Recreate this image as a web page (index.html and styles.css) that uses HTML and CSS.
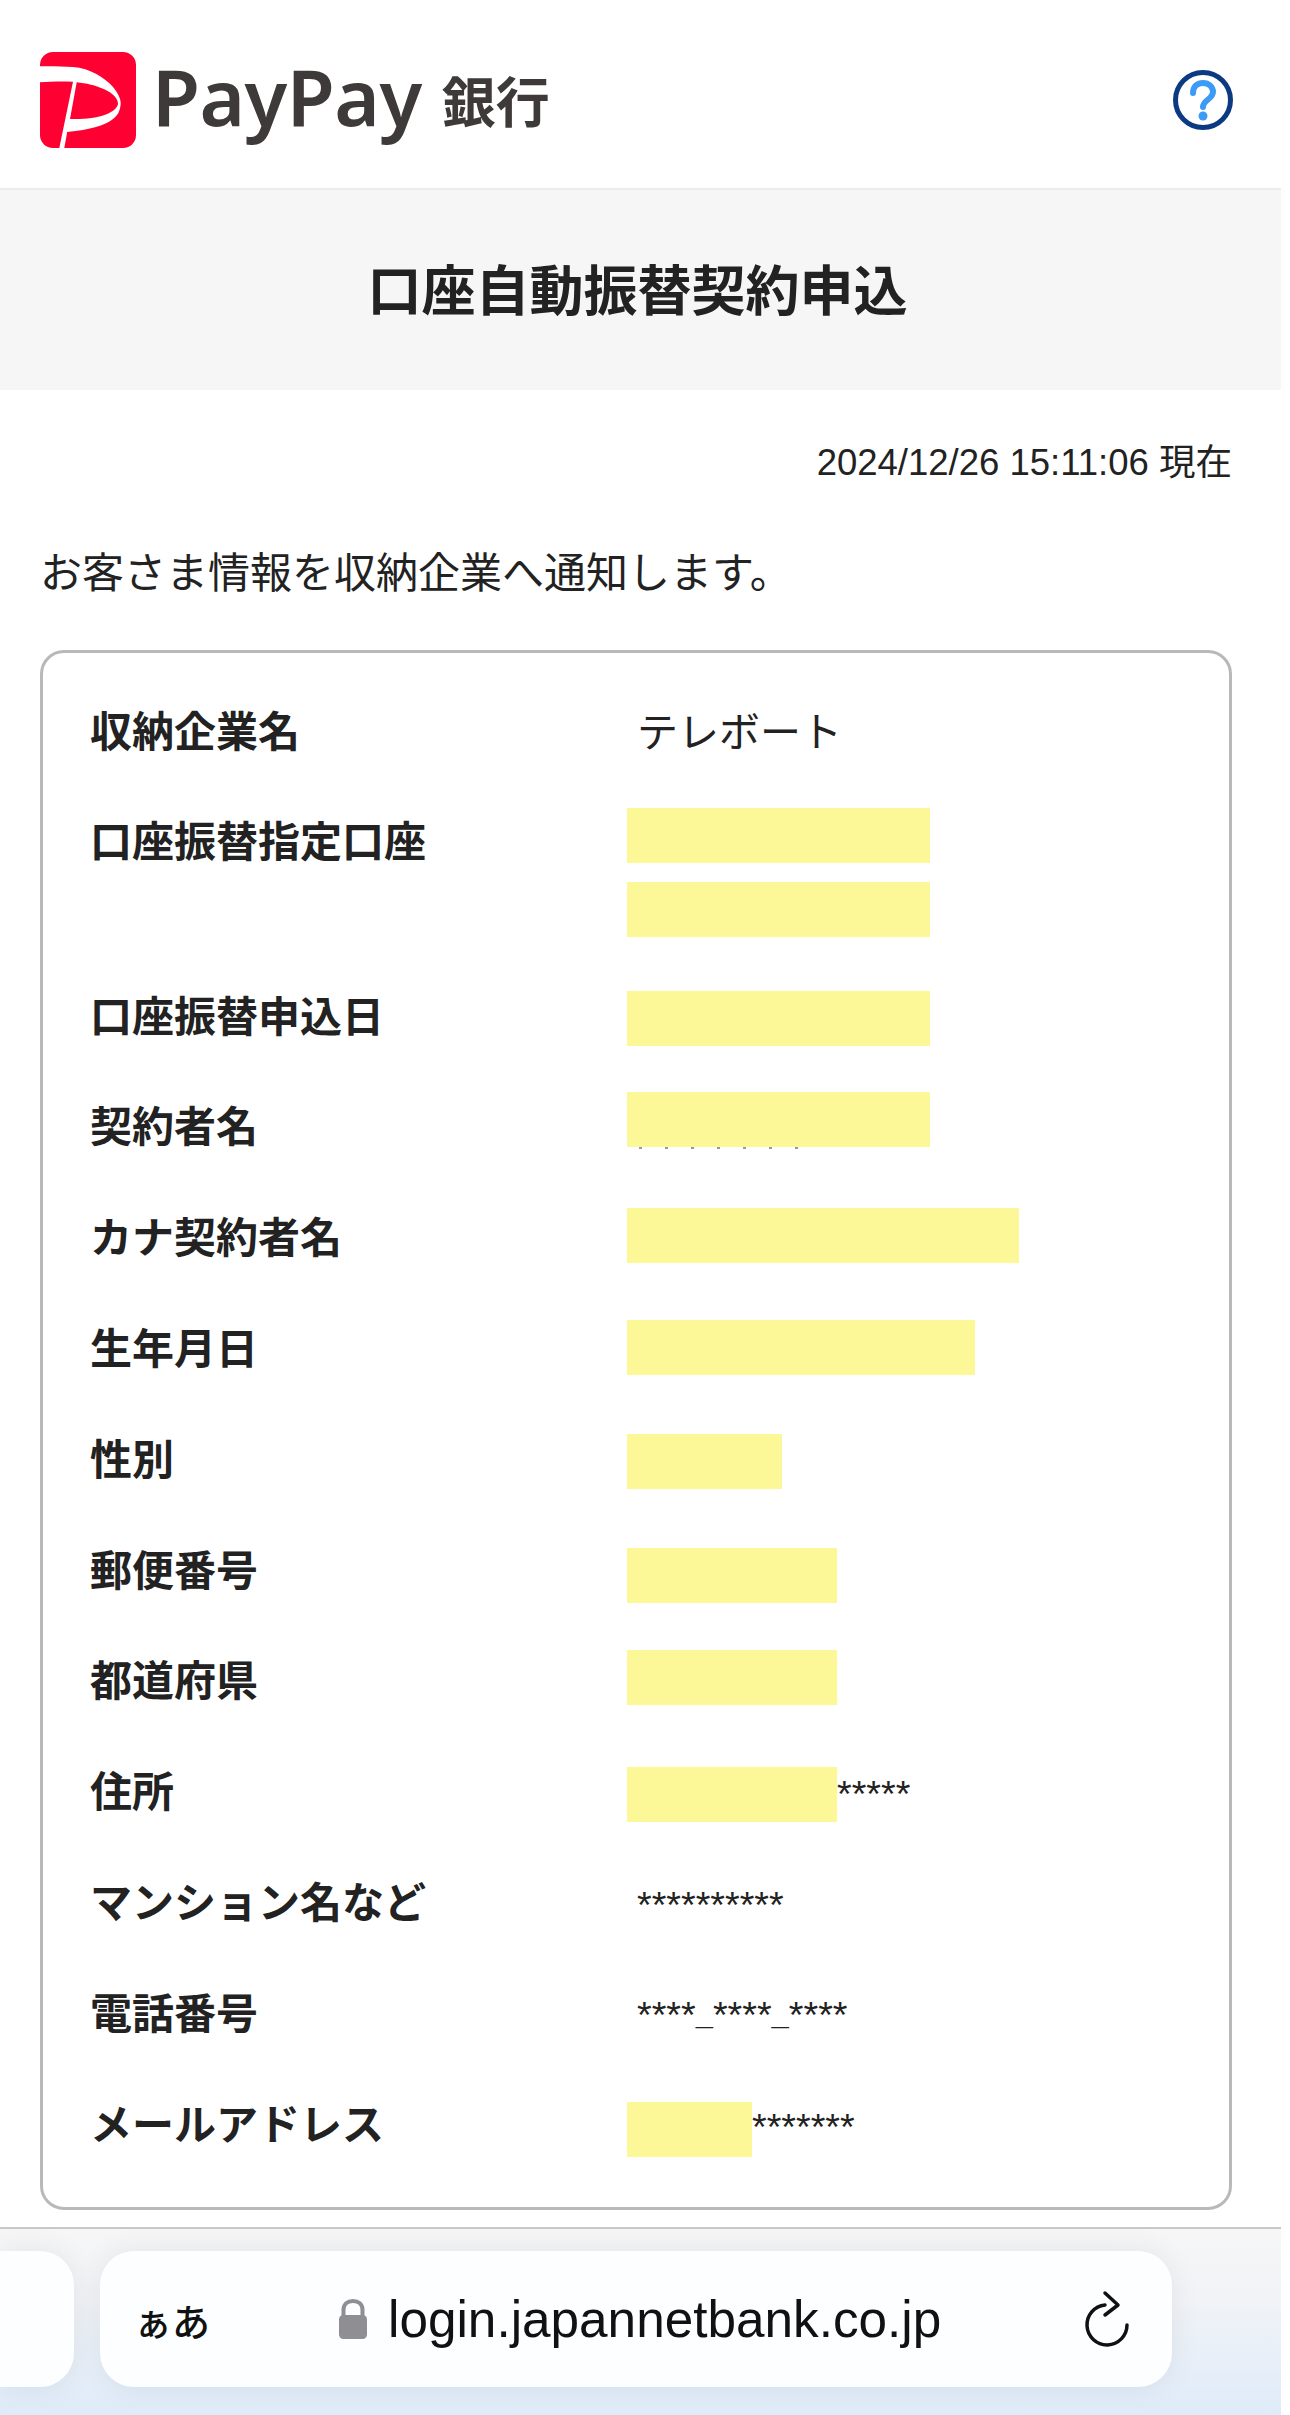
FILE: index.html
```html
<!DOCTYPE html>
<html lang="ja">
<head>
  <meta charset="UTF-8" />
  <title>口座自動振替契約申込</title>
  <link rel="stylesheet" href="styles.css">
</head>
<body>
  <div class="page">
    <header class="topbar">
      <div class="brand">
        <svg class="brand-mark" viewBox="0 0 96 96" aria-hidden="true">
          <rect width="96" height="96" rx="13" fill="#ff0033" />
          <path d="M0 14.300C12 14 22 14.500 33 15C50 16 65 26 73 35C78 41 81 47 80.700 52C80 60 77 64 73 67C66 73 50 78 27.200 80L24.300 96L19.300 96L33 29.700C22 29.300 10 29.500 0 30.300Z" fill="#fff" />
          <path d="M36.700 30.300C55 32 78 40 78 52C76 62 55 68 30 67Z" fill="#ff0033" />
        </svg>
        <span class="brand-name">PayPay</span>
        <span class="brand-bank">銀行</span>
      </div>
      <svg class="help" viewBox="0 0 60 60" aria-hidden="true">
        <circle cx="30" cy="30" r="27.500" fill="#fff" stroke="#0b3a82" stroke-width="5" />
        <path d="M20 23C20 16 25 13 30 13C36 13 40 17 40 22C40 29 30 30 30 37" fill="none" stroke="#3c9bf6" stroke-width="6" stroke-linecap="round" />
        <circle cx="30" cy="46" r="4.500" fill="#3c9bf6" />
      </svg>
    </header>

    <h1 class="title">口座自動振替契約申込</h1>

    <main class="content">
      <p class="timestamp">2024/12/26 15:11:06 現在</p>
      <p class="intro">お客さま情報を収納企業へ通知します。</p>

      <dl class="card">
        <div class="row">
          <dt>収納企業名</dt>
          <dd class="plain">テレボート</dd>
        </div>
        <div class="row row-double">
          <dt>口座振替指定口座</dt>
          <dd>
            <span class="redact w-lg"></span>
            <span class="redact w-lg next"></span>
          </dd>
        </div>
        <div class="row">
          <dt>口座振替申込日</dt>
          <dd><span class="redact w-lg"></span></dd>
        </div>
        <div class="row">
          <dt>契約者名</dt>
          <dd><span class="redact w-lg trace"></span></dd>
        </div>
        <div class="row">
          <dt>カナ契約者名</dt>
          <dd><span class="redact w-xl"></span></dd>
        </div>
        <div class="row">
          <dt>生年月日</dt>
          <dd><span class="redact w-birth"></span></dd>
        </div>
        <div class="row">
          <dt>性別</dt>
          <dd><span class="redact w-xs"></span></dd>
        </div>
        <div class="row">
          <dt>郵便番号</dt>
          <dd><span class="redact w-md"></span></dd>
        </div>
        <div class="row">
          <dt>都道府県</dt>
          <dd><span class="redact w-md"></span></dd>
        </div>
        <div class="row">
          <dt>住所</dt>
          <dd><span class="redact w-md"></span><span class="stars">*****</span></dd>
        </div>
        <div class="row">
          <dt>マンション名など</dt>
          <dd class="masked"><span class="stars">**********</span></dd>
        </div>
        <div class="row">
          <dt>電話番号</dt>
          <dd class="masked"><span class="stars">****<span class="sep">_</span>****<span class="sep">_</span>****</span></dd>
        </div>
        <div class="row">
          <dt>メールアドレス</dt>
          <dd><span class="redact w-sm"></span><span class="stars">*******</span></dd>
        </div>
      </dl>
    </main>

    <footer class="toolbar">
      <div class="tab-prev"></div>
      <div class="address">
        <span class="aa">ぁあ</span>
        <div class="url">
          <svg class="lock" viewBox="0 0 28 40" aria-hidden="true">
            <path d="M4.500 18V11C4.500 5 8.500 2 14 2C19.500 2 23.500 5 23.500 11V18" fill="none" stroke="#8e8e93" stroke-width="4" />
            <rect y="16" width="28" height="24" rx="4.500" fill="#8e8e93" />
          </svg>
          <span class="url-text">login.japannetbank.co.jp</span>
        </div>
        <svg class="reload" viewBox="0 0 48 58" aria-hidden="true">
          <path d="M43 35A20 20 0 1 1 21 15" fill="none" stroke="#111" stroke-width="3.500" stroke-linecap="round" />
          <path d="M21 3L34 15L21 25" fill="none" stroke="#111" stroke-width="3.500" stroke-linecap="round" stroke-linejoin="round" />
        </svg>
      </div>
    </footer>
  </div>
</body>
</html>
```

FILE: styles.css
```css
:root {
  --ink: #222;
  --line: #b9b9b9;
  --marker: #fdf897;
}

* { box-sizing: border-box; }

html, body { margin: 0; background: #fff; }

body {
  font-family: "Liberation Sans", "Noto Sans CJK JP", sans-serif;
  color: var(--ink);
}

.page {
  width: 1281px;
  height: 2415px;
  display: flex;
  flex-direction: column;
}

.topbar {
  height: 190px;
  flex: none;
  padding: 12px 48px 0 40px;
  display: flex;
  align-items: center;
  justify-content: space-between;
  border-bottom: 2px solid #ececec;
}

.brand { display: flex; align-items: center; }
.brand-mark { width: 96px; height: 96px; flex: none; }

.brand-name {
  margin: 0 0 8px 16px;
  font-family: "Noto Sans", sans-serif;
  font-size: 78px;
  font-weight: 600;
  letter-spacing: -0.5px;
  line-height: 96px;
  color: #3e3a39;
}

.brand-bank {
  margin-left: 20px;
  font-family: "Noto Sans CJK JP", sans-serif;
  font-size: 54px;
  font-weight: 700;
  line-height: 96px;
  color: #3e3a39;
}

.help { width: 60px; height: 60px; flex: none; }

.title {
  margin: 0;
  height: 200px;
  flex: none;
  padding: 0 6px 6px 0;
  display: flex;
  align-items: center;
  justify-content: center;
  background: #f6f6f6;
  font-family: "Noto Sans CJK JP", sans-serif;
  font-size: 54px;
  font-weight: 700;
  color: #222;
}

.content {
  flex: 1;
  padding: 0 49px 0 40px;
}

.timestamp {
  margin: 50px 0 0;
  text-align: right;
  font-size: 36.500px;
  line-height: 46px;
}

.intro {
  margin: 58px 0 0;
  font-size: 42px;
  line-height: 60px;
}

.card {
  margin: 46px 0 0;
  height: 1560px;
  padding: 20px 0 0 47px;
  border: 3px solid var(--line);
  border-radius: 24px;
}

.row {
  height: 110.800px;
  display: flex;
  align-items: center;
}

.row-double { height: 174px; align-items: flex-start; padding-top: 27px; }

dt {
  width: 537px;
  flex: none;
  font-family: "Noto Sans CJK JP", sans-serif;
  font-size: 42px;
  font-weight: 700;
  line-height: 55px;
}

dd {
  margin: 0;
  display: flex;
  align-items: flex-start;
  min-height: 55px;
}

.plain {
  padding: 11px 0 0 10px;
  font-size: 41px;
  line-height: 55px;
}

.masked { padding-left: 10px; }

.stars {
  font-size: 37.700px;
  line-height: 55px;
  white-space: nowrap;
  position: relative;
  top: 6px;
}

/* phone separators sit higher and heavier than a plain underscore */
.sep {
  font-size: 31px;
  font-weight: 700;
  position: relative;
  top: -4px;
}

/* yellow blocks painted over private values */
.redact {
  display: block;
  flex: none;
  height: 55px;
  background: var(--marker);
  position: relative;
}

.row-double dd { display: block; }
.next { margin-top: 19px; }

/* the blocks were placed by hand, none sits quite on the text line */
.row:nth-child(2) .redact { top: -3px; }
.row:nth-child(3) .redact { top: 5px; }
.row:nth-child(4) .redact { top: -4px; }
.row:nth-child(5) .redact { top: 1px; }
.row:nth-child(6) .redact { top: 2px; }
.row:nth-child(7) .redact { top: 5px; }
.row:nth-child(8) .redact { top: 8px; }
.row:nth-child(9) .redact { top: 0; }
.row:nth-child(10) .redact { top: 6px; }
.row:nth-child(13) .redact { top: 8px; }

.w-xs { width: 155px; }
.w-sm { width: 125px; }
.w-md { width: 210px; }
.w-lg { width: 303px; }
.w-birth { width: 348px; }
.w-xl { width: 392px; }

/* tips of the masked name showing under the block */
.trace::after {
  content: "";
  position: absolute;
  left: 12px;
  top: 100%;
  width: 170px;
  height: 2px;
  background: repeating-linear-gradient(90deg, #999 0 3px, transparent 3px 26px);
}

.toolbar {
  height: 188px;
  flex: none;
  padding-top: 22px;
  display: flex;
  gap: 26px;
  border-top: 2px solid #c8c8c8;
  background: linear-gradient(#f6f6f6, #f0f3f7 40%, #dfebf9);
}

.tab-prev {
  width: 74px;
  height: 136px;
  background: #fdfeff;
  border-radius: 0 34px 34px 0;
  box-shadow: 0 0 30px rgba(0, 0, 0, 0.07);
}

.address {
  width: 1072px;
  height: 136px;
  padding: 0 40px 0 34px;
  display: flex;
  align-items: center;
  background: #fdfeff;
  border-radius: 34px;
  box-shadow: 0 0 30px rgba(0, 0, 0, 0.07);
}

.aa {
  width: 76px;
  flex: none;
  font-family: "Noto Sans CJK JP", sans-serif;
  font-size: 38px;
  font-weight: 500;
  white-space: nowrap;
  color: #111;
}

.url {
  margin-left: 129px;
  display: flex;
  align-items: center;
  gap: 21px;
}

.lock { width: 28px; height: 40px; flex: none; }

.url-text {
  font-size: 51.300px;
  color: #111;
}

.reload { width: 48px; height: 58px; flex: none; margin-left: auto; }
```
